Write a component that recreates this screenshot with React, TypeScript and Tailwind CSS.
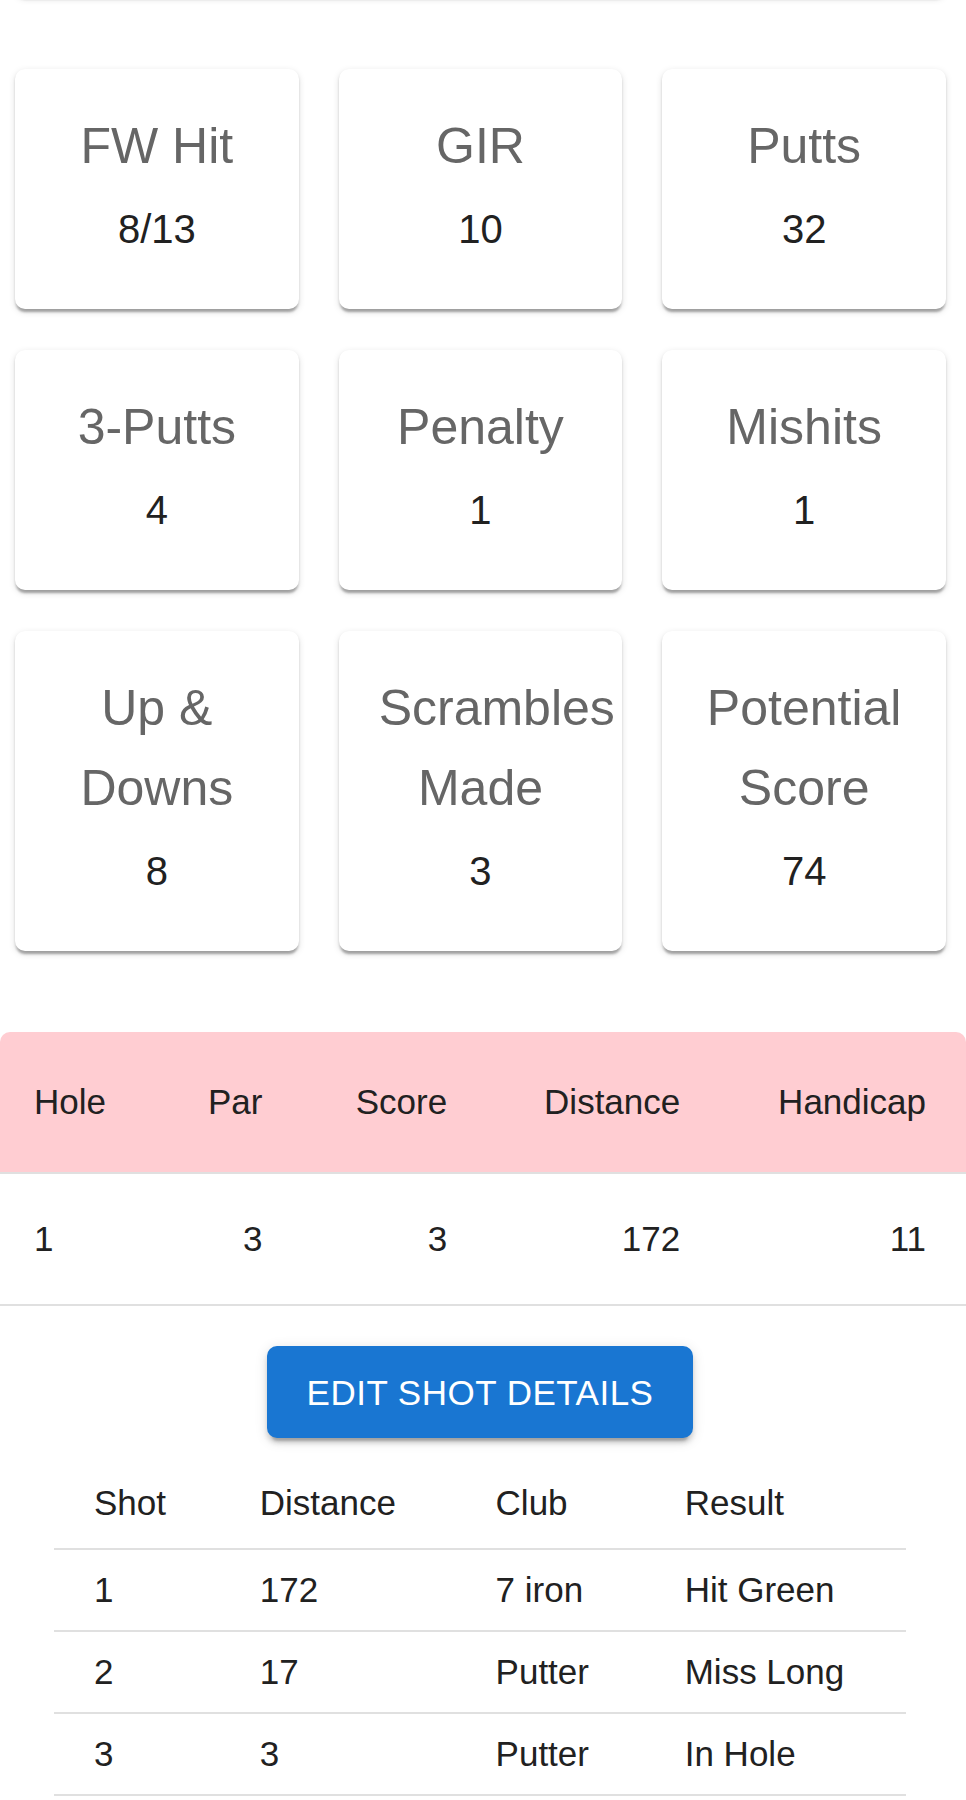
const stats = [
  { label: 'FW Hit', value: '8/13' },
  { label: 'GIR', value: '10' },
  { label: 'Putts', value: '32' },
  { label: '3-Putts', value: '4' },
  { label: 'Penalty', value: '1' },
  { label: 'Mishits', value: '1' },
  { label: 'Up & Downs', value: '8' },
  { label: 'Scrambles Made', value: '3' },
  { label: 'Potential Score', value: '74' },
]

const shots = [
  { shot: '1', distance: '172', club: '7 iron', result: 'Hit Green' },
  { shot: '2', distance: '17', club: 'Putter', result: 'Miss Long' },
  { shot: '3', distance: '3', club: 'Putter', result: 'In Hole' },
]

const cardShadow =
  'shadow-[0_5px_2.5px_-2.5px_rgba(0,0,0,0.2),0_2.5px_2.5px_0_rgba(0,0,0,0.14),0_2.5px_7.5px_0_rgba(0,0,0,0.12)]'

export default function App() {
  return (
    <div className="min-h-screen bg-white font-[Liberation_Sans,Arial,Helvetica,sans-serif] text-[#212121]">
      {/* bottom edge of the panel above, only its shadow shows */}
      <div className="flow-root">
        <div className={`ml-[15px] mr-[20px] -mt-[44px] h-[40px] rounded-[10px] bg-white ${cardShadow}`} />
      </div>

      {/* Stat cards */}
      <div className="ml-[15px] mr-[20px] mt-[69px] grid grid-cols-3 gap-x-10 gap-y-[41px]">
        {stats.map((s) => (
          <div
            key={s.label}
            className={`rounded-[10px] bg-white px-[40px] pt-[37px] pb-[50px] text-center ${cardShadow}`}
          >
            <div className="text-[50px] leading-[80px] text-[#666666]">{s.label}</div>
            <div className="mt-[13px] text-[40px] leading-[60px] text-[#212121]">{s.value}</div>
          </div>
        ))}
      </div>

      {/* Hole table */}
      <div className="mt-[81px] overflow-hidden rounded-t-[10px]">
        <table className="w-full border-collapse text-[35px]">
          <thead>
            <tr className="bg-[#ffcdd2]">
              <th className="border-b-[2.5px] border-[#e0e0e0] py-[40px] pl-[34px] pr-[40px] text-left font-normal leading-[60px]">
                Hole
              </th>
              <th className="border-b-[2.5px] border-[#e0e0e0] px-[40px] py-[40px] text-right font-normal leading-[60px]">
                Par
              </th>
              <th className="border-b-[2.5px] border-[#e0e0e0] px-[40px] py-[40px] text-right font-normal leading-[60px]">
                Score
              </th>
              <th className="border-b-[2.5px] border-[#e0e0e0] px-[40px] py-[40px] text-right font-normal leading-[60px]">
                Distance
              </th>
              <th className="border-b-[2.5px] border-[#e0e0e0] px-[40px] py-[40px] text-right font-normal leading-[60px]">
                Handicap
              </th>
            </tr>
          </thead>
          <tbody>
            <tr>
              <td className="border-b-[2.5px] border-[#e0e0e0] py-[40px] pl-[34px] pr-[40px] text-left leading-[50px]">1</td>
              <td className="border-b-[2.5px] border-[#e0e0e0] px-[40px] py-[40px] text-right leading-[50px]">3</td>
              <td className="border-b-[2.5px] border-[#e0e0e0] px-[40px] py-[40px] text-right leading-[50px]">3</td>
              <td className="border-b-[2.5px] border-[#e0e0e0] px-[40px] py-[40px] text-right leading-[50px]">172</td>
              <td className="border-b-[2.5px] border-[#e0e0e0] px-[40px] py-[40px] text-right leading-[50px]">11</td>
            </tr>
            <tr>
              <td colSpan={5} className="pl-[34px] pr-[40px] pt-[40px] pb-0">
                <div className="flex justify-center">
                  <button className="h-[92px] rounded-[10px] bg-[#1976d2] px-[40px] text-[35px] leading-[61px] uppercase tracking-[0.5px] text-white shadow-[0_7.5px_2.5px_-5px_rgba(0,0,0,0.2),0_5px_5px_0_rgba(0,0,0,0.14),0_2.5px_12.5px_0_rgba(0,0,0,0.12)]">
                    Edit Shot Details
                  </button>
                </div>

                {/* Shot details */}
                <div className="mx-[20px] mt-[20px] mb-[20px]">
                  <table className="w-full border-collapse">
                    <thead>
                      <tr>
                        {['Shot', 'Distance', 'Club', 'Result'].map((h) => (
                          <th
                            key={h}
                            className="border-b-[2.5px] border-[#e0e0e0] px-[40px] py-[15px] text-left font-normal leading-[60px]"
                          >
                            {h}
                          </th>
                        ))}
                      </tr>
                    </thead>
                    <tbody>
                      {shots.map((r) => (
                        <tr key={r.shot}>
                          <td className="border-b-[2.5px] border-[#e0e0e0] px-[40px] py-[15px] leading-[50px]">{r.shot}</td>
                          <td className="border-b-[2.5px] border-[#e0e0e0] px-[40px] py-[15px] leading-[50px]">{r.distance}</td>
                          <td className="border-b-[2.5px] border-[#e0e0e0] px-[40px] py-[15px] leading-[50px]">{r.club}</td>
                          <td className="border-b-[2.5px] border-[#e0e0e0] px-[40px] py-[15px] leading-[50px]">{r.result}</td>
                        </tr>
                      ))}
                    </tbody>
                  </table>
                </div>
              </td>
            </tr>
          </tbody>
        </table>
      </div>
    </div>
  )
}
